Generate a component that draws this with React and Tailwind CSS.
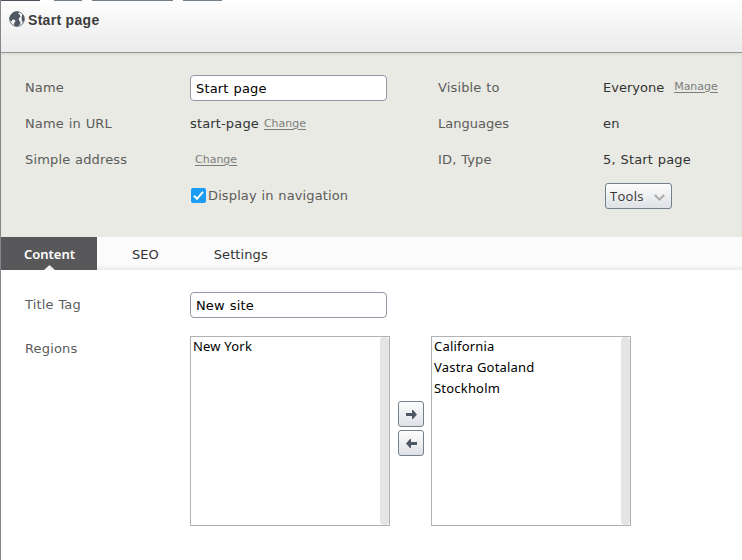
const label = "text-[#5c5c5c]";
const link = "text-[11px] tracking-normal text-[#7d7d7d] underline underline-offset-2";
const input =
  "h-[26px] w-[197px] rounded-[4px] border border-[#9098a6] bg-white pl-[5px] pt-px text-[13px] leading-[24px] tracking-[0.15px] text-black outline-none [word-spacing:0.7px]";
const button =
  "flex items-center rounded-[3px] border border-[#74808a] bg-linear-to-b from-[#fdfdfd] to-[#dfe1e6]";

function Globe() {
  return (
    <svg className="mt-[10px] h-4 w-4 shrink-0" viewBox="0 0 16 16">
      <circle cx="8" cy="8" r="7.4" fill="#f7f7f7" stroke="#6a717b" strokeWidth="1" />
      <path
        fill="#4f5763"
        d="M3.4 2.2 6 .8 10 .8 9.4 3 10.8 3.6 11.4 5.6 9.6 8 10.4 10 11.6 11.4 11 13.6 8.4 15.4 5.2 14.8 5 12.6 6.4 10.4 5.8 8.8 3.6 8.6 2.6 10.4.8 9 .8 6.2 2.2 3.6ZM13.4 3.2 15 5.8 15.2 9.2 13.8 11.6 12.8 9.8 12.6 6.2Z"
      />
    </svg>
  );
}

function Arrow({ flip }) {
  return (
    <svg className={flip ? "h-[9px] w-[11px] -scale-x-100" : "h-[9px] w-[11px]"} viewBox="0 0 11 9">
      <path fill="#505764" d="M0 3h6V0h1l4 4.5L7 9H6V6H0Z" />
    </svg>
  );
}

function ListBox({ items }) {
  return (
    <div className="flex h-[190px] w-[200px] border border-[#b2b2b2] bg-white">
      <ul className="-mt-px flex-1 pl-[2px] font-['Noto_Sans',sans-serif] text-[13px] leading-[21px] tracking-[0.2px] text-black [word-spacing:0]">
        {items.map((item) => (
          <li key={item}>{item}</li>
        ))}
      </ul>
      <div className="w-[9px] rounded-[4px] bg-[#e5e5e5]" />
    </div>
  );
}

export default function App() {
  return (
    <div className="h-[560px] w-[742px] overflow-hidden border-l border-[#85858a] bg-white font-['DejaVu_Sans',Verdana,sans-serif] text-[13px] tracking-[0.15px] text-[#333] [word-spacing:0.5px]">
      <header className="flex h-[53px] flex-col border-b border-[#969696] bg-linear-to-b from-[#fefefe] to-[#ebebeb]">
        <div className="flex h-px shrink-0">
          <i className="w-[39px] bg-[#4d4f5b]" />
          <i className="ml-[14px] w-[28px] bg-[#74808a]" />
          <i className="ml-[10px] w-[81px] bg-[#74808a]" />
          <i className="ml-[10px] w-[39px] bg-[#74808a]" />
        </div>
        <div className="flex pl-2">
          <Globe />
          <h1 className="ml-[3px] mt-[10px] font-['Liberation_Sans',Arial,sans-serif] text-[14px] font-bold leading-[18px] tracking-[0.3px] text-[#3c3c3c] [word-spacing:0]">
            Start page
          </h1>
        </div>
      </header>

      <section className="grid h-[184px] auto-rows-[36px] grid-cols-[165px_248px_165px_1fr] items-center bg-[#e9eae3] pl-6 pt-[17px] shadow-[inset_0_2px_3px_-1px_#d5d6d0]">
        <span className={label}>Name</span>
        <input className={input} defaultValue="Start page" />
        <span className={label}>Visible to</span>
        <div className="flex items-center">
          <span className="tracking-normal">Everyone</span>
          <a className={`${link} -mt-[2px] ml-[10px]`}>Manage</a>
        </div>

        <span className={label}>Name in URL</span>
        <div className="flex items-center">
          <span>start-page</span>
          <a className={`${link} ml-[5px]`}>Change</a>
        </div>
        <span className={`${label} tracking-normal`}>Languages</span>
        <span>en</span>

        <span className={label}>Simple address</span>
        <div className="flex items-center">
          <a className={`${link} ml-[5px]`}>Change</a>
        </div>
        <span className={label}>ID, Type</span>
        <span>5, Start page</span>

        <span />
        <div className={`flex items-center ${label}`}>
          <svg className="-mt-px ml-px h-[15px] w-[15px]" viewBox="0 0 15 15">
            <rect width="15" height="15" rx="2" fill="#1b9cf5" />
            <path d="m3 7.8 3 3 6-7" fill="none" stroke="#fff" strokeWidth="2" />
          </svg>
          <span className="ml-[2px] tracking-[0.12px]">Display in navigation</span>
        </div>
        <span />
        <button className={`${button} ml-[2px] h-[26px] w-[67px] pl-[4px] pt-px font-['Open_Sans',sans-serif] tracking-[0.3px]`}>
          <span>Tools</span>
          <svg className="ml-auto mr-[6px] mt-[3px] h-[8px] w-[11px]" viewBox="0 0 11 8">
            <path d="m.8 1 4.7 4.7L10.2 1" fill="none" stroke="#aaa" strokeWidth="2" />
          </svg>
        </button>
      </section>

      <nav className="flex h-[33px] bg-[linear-gradient(#fbfbfb_85%,#eaeaea)] leading-[35px]">
        <div className="relative w-24 bg-[#58585a] pl-px text-center text-white">
          <span className="font-['Noto_Sans',sans-serif] font-semibold tracking-normal">Content</span>
          <svg className="absolute bottom-0 left-[43px] h-[5px] w-[11px]" viewBox="0 0 11 5">
            <path d="M0 5 5.5 0 11 5Z" fill="#f1f1f1" />
          </svg>
        </div>
        <span className="ml-[35px] tracking-normal">SEO</span>
        <span className="ml-[55px] tracking-[0.1px]">Settings</span>
      </nav>

      <section className="pl-6 pt-[22px]">
        <div className="flex h-[26px] items-center">
          <span className={`w-[165px] ${label}`}>Title Tag</span>
          <input className={input} defaultValue="New site" />
        </div>
        <div className="mt-[18px] flex">
          <span className={`w-[165px] pt-[3px] leading-[20px] ${label}`}>Regions</span>
          <ListBox items={["New York"]} />
          <div className="mx-[8px] mt-[65px] flex w-[25px] flex-col gap-[3px]">
            <button className={`${button} h-[26px] w-[26px] justify-center`}>
              <Arrow />
            </button>
            <button className={`${button} h-[26px] w-[26px] justify-center`}>
              <Arrow flip />
            </button>
          </div>
          <ListBox items={["California", "Vastra Gotaland", "Stockholm"]} />
        </div>
      </section>
    </div>
  );
}
